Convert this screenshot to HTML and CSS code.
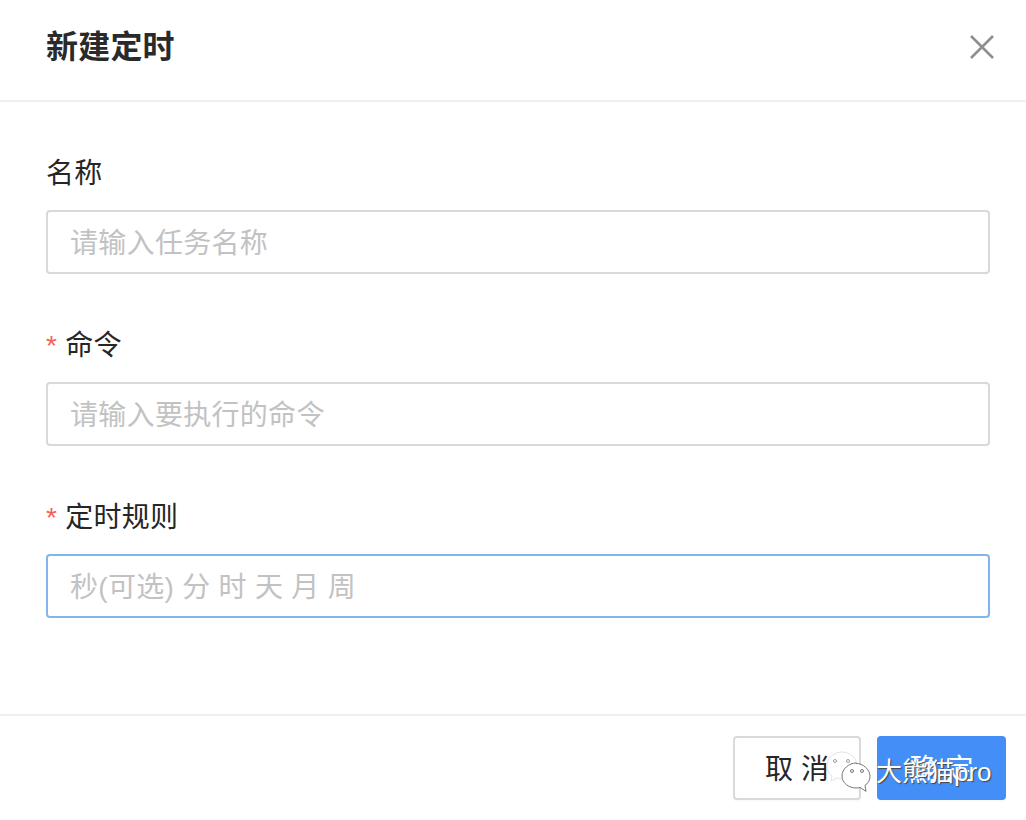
FILE: index.html
```html
<!DOCTYPE html>
<html lang="zh-CN">
<head>
    <meta charset="UTF-8">
    <meta name="viewport" content="width=device-width, initial-scale=1.0">
    <title>新建定时</title>
    <link rel="stylesheet" href="styles.css">
</head>
<body>
    <div class="dialog">
        <div class="dialog-header">
            <h2>新建定时</h2>
            <button class="close-button" aria-label="关闭">
                <svg width="26" height="26" viewBox="0 0 26 26"><path d="M2 2L24 24M24 2L2 24" stroke="#8f8f8f" stroke-width="2.6" fill="none"/></svg>
            </button>
        </div>

        <form class="dialog-body">
            <div class="form-item">
                <label>名称</label>
                <input type="text" placeholder="请输入任务名称">
            </div>
            <div class="form-item">
                <label><span class="required">*</span>命令</label>
                <input type="text" placeholder="请输入要执行的命令">
            </div>
            <div class="form-item">
                <label><span class="required">*</span>定时规则</label>
                <input class="focused" type="text" placeholder="秒(可选) 分 时 天 月 周">
            </div>
        </form>

        <div class="dialog-footer">
            <button class="btn">取 消</button>
            <button class="btn btn-primary">确 定</button>
        </div>
    </div>

    <div class="watermark">
        <svg width="46" height="42" viewBox="0 0 46 42">
            <path d="M16 1C8 1 1 7 1 15c0 4 2 8 5 10l-1 5 6-3c2 .6 3 .8 5 .8 8 0 15-5 15-13S24 1 16 1z" fill="#fff" stroke="#e2e2e2" stroke-width="1"/>
            <circle cx="9" cy="10" r="1.500" fill="none" stroke="#888" stroke-width=".8"/>
            <circle cx="22" cy="10" r="1.500" fill="none" stroke="#888" stroke-width=".8"/>
            <path d="M30 12c-7 0-14 6-14 13s7 12 14 12c1.500 0 3-.2 4-.6l6 4-1-6c3-2 5-5 5-9 0-7-7-13-14-13z" fill="#fff" stroke="#777" stroke-width="1"/>
            <circle cx="26" cy="20" r="1.500" fill="none" stroke="#555" stroke-width=".8"/>
            <circle cx="36" cy="20" r="1.500" fill="none" stroke="#555" stroke-width=".8"/>
        </svg>
        <span class="watermark-text">大熊猫pro</span>
    </div>
</body>
</html>
```

FILE: styles.css
```css
* {
    box-sizing: border-box;
}
html, body {
    height: 100%;
}
body {
    margin: 0;
    background-color: #fff;
    color: #262626;
    font-family: "Liberation Sans", "Noto Sans CJK SC", sans-serif;
    overflow: hidden;
}
.dialog {
    position: relative;
    height: 820px;
}
.dialog-header {
    display: flex;
    justify-content: space-between;
    align-items: center;
    height: 102px;
    padding: 0 31px 6px 46px;
    border-bottom: 2px solid #f0f0f0;
}
.dialog-header h2 {
    margin: 0 0 6px;
    font-size: 32px;
    font-weight: 700;
    letter-spacing: 0.2px;
    color: #2a2a2a;
}
.close-button {
    display: flex;
    padding: 0;
    border: none;
    background: none;
}
.dialog-body {
    height: 612px;
    padding: 50px 36px 0 46px;
}
.form-item {
    margin-bottom: 50px;
}
.form-item label {
    display: block;
    height: 44px;
    margin-bottom: 14px;
    font-size: 28px;
    line-height: 44px;
    letter-spacing: 0.3px;
}
.required {
    margin-right: 8px;
    color: #f5625c;
}
.form-item input {
    display: block;
    width: 100%;
    height: 64px;
    padding: 4px 22px 0;
    border: 2px solid #d9d9d9;
    border-radius: 4px;
    outline: none;
    font-family: inherit;
    font-size: 28px;
    letter-spacing: 0.3px;
    color: #262626;
}
.form-item input::placeholder {
    color: #c2c2c2;
}
.form-item input.focused {
    border-color: #82b5ec;
}
.dialog-footer {
    display: flex;
    justify-content: flex-end;
    gap: 16px;
    height: 106px;
    padding: 20px 20px 0 0;
    border-top: 2px solid #f0f0f0;
}
.btn {
    width: 128px;
    height: 64px;
    padding-bottom: 3px;
    border: 2px solid #d9d9d9;
    border-radius: 4px;
    background-color: #fff;
    color: #262626;
    font-family: inherit;
    font-size: 28px;
    box-shadow: 0 2px 0 rgba(0,0,0,0.02);
}
.btn-primary {
    width: 129px;
    border-color: #448ef7;
    background-color: #448ef7;
    color: #fff;
}
.watermark {
    position: absolute;
    left: 826px;
    top: 751px;
    display: flex;
    align-items: center;
    gap: 4px;
}
.watermark-text {
    margin-top: -6px;
    font-size: 26px;
    color: #fff;
    white-space: nowrap;
    text-shadow: 1px 1px 1px #444;
}
```
